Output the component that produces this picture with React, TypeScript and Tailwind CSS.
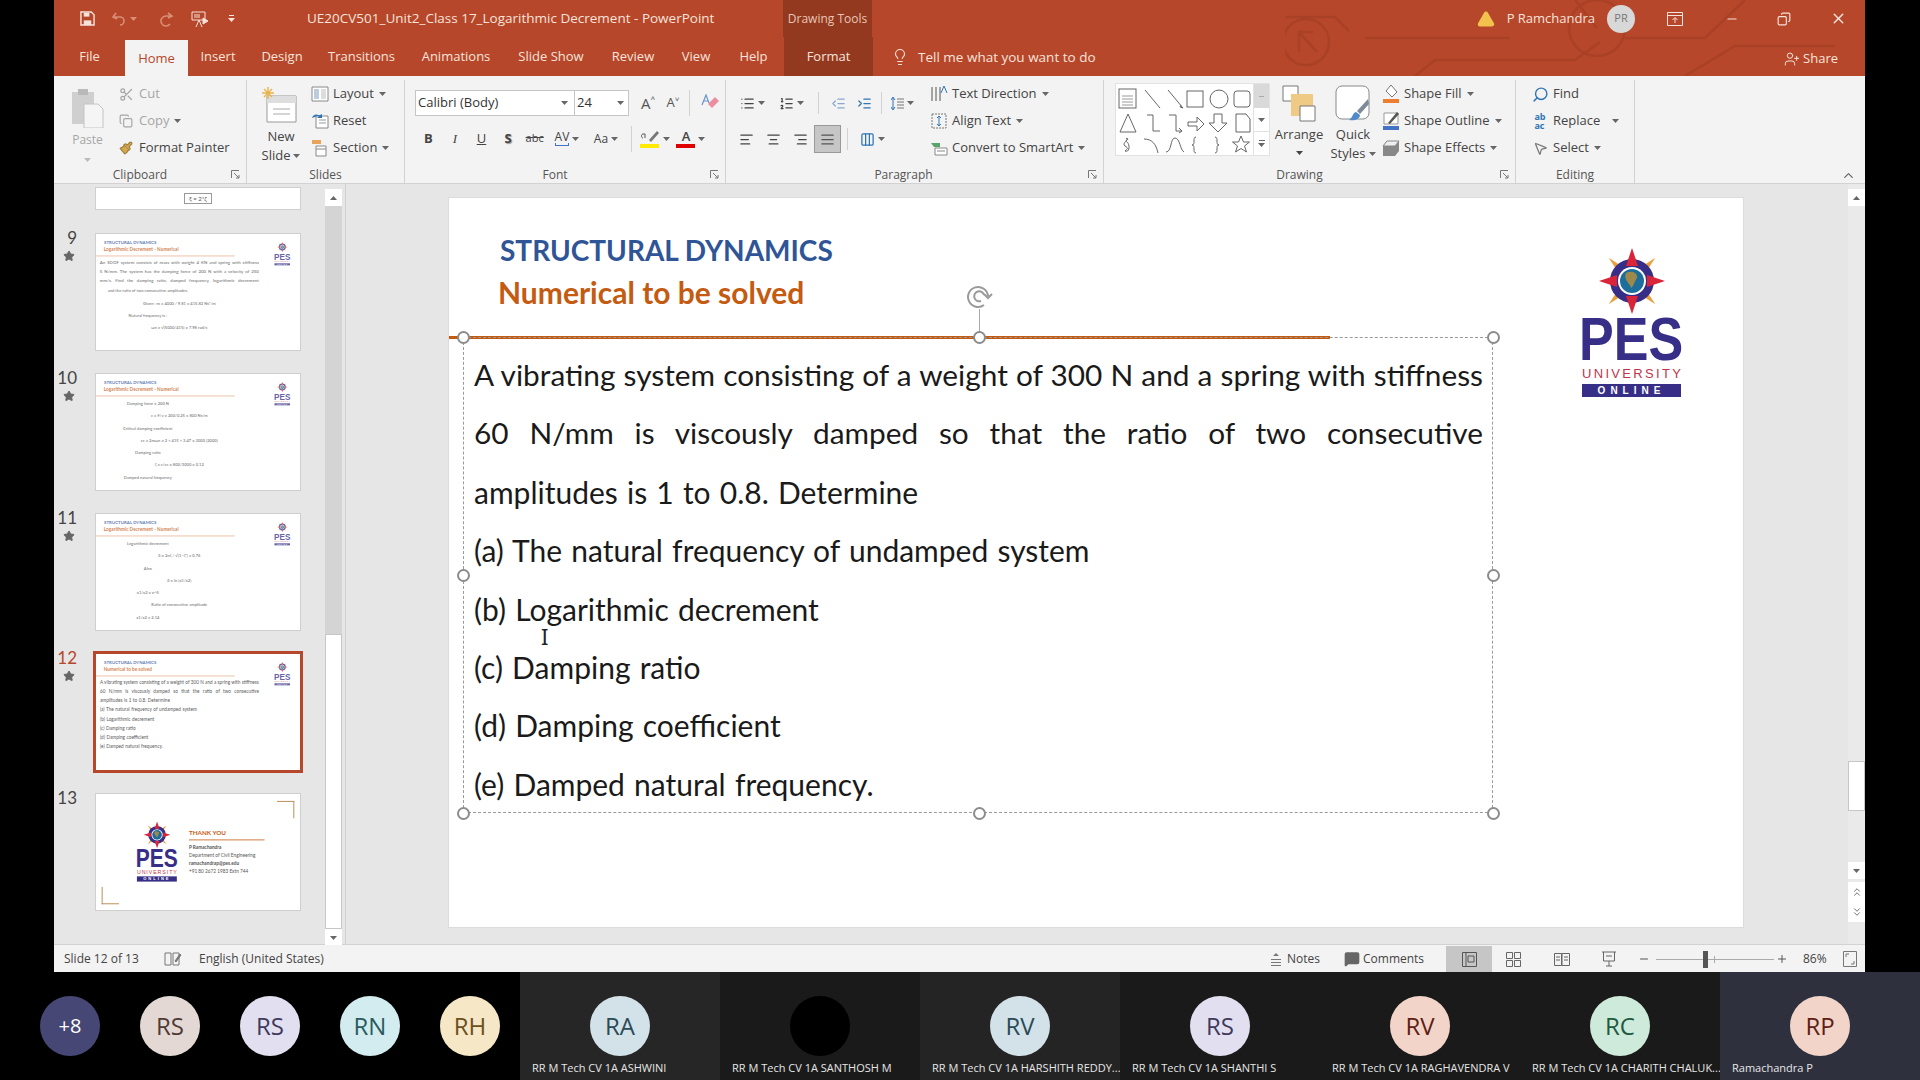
import {
  AlignCenter,
  AlignJustify,
  AlignLeft,
  AlignRight,
  ChevronDown,
  ChevronUp,
  Columns3,
  Copy,
  IndentDecrease,
  IndentIncrease,
  Lightbulb,
  List,
  ListOrdered,
  MessageSquare,
  Minus,
  MousePointer2,
  Paintbrush,
  Plus,
  Scissors,
  Search,
  Star,
  TriangleAlert,
  UserPlus,
  X,
} from "lucide-react";
import type { ReactNode } from "react";

const ui = "font-['Open_Sans','Liberation_Sans',sans-serif]";
const slideFont = "font-['Lato','Liberation_Sans',sans-serif]";

function Caret({ className = "text-[#666]" }: { className?: string }) {
  return (
    <svg width="7" height="4" viewBox="0 0 7 4" className={`shrink-0 ${className}`}>
      <path d="M0 0h7L3.5 4z" fill="currentColor" />
    </svg>
  );
}

function Tab({ label, w, active, ctx }: { label: string; w: string; active?: boolean; ctx?: boolean }) {
  return (
    <div
      className={`flex ${w} items-center justify-center pt-[1px] text-[13px] ${
        active ? "mt-[3px] bg-[#f3f3f3] text-[#b7472a]" : ctx ? "bg-[#93391f] text-[#f6e3dc]" : "text-[#f6e3dc]"
      }`}
    >
      {label}
    </div>
  );
}

function SmallBtn({ icon, label, caret, muted, gap = "gap-[3px]" }: { icon: ReactNode; label: string; caret?: boolean; muted?: boolean; gap?: string }) {
  return (
    <div className={`flex h-[27px] items-center ${gap} whitespace-nowrap pt-[1px] text-[13px] ${muted ? "text-[#a6a6a6]" : "text-[#444]"}`}>
      <span className="flex w-[20px] shrink-0 items-center justify-center">{icon}</span>
      <span>{label}</span>
      {caret && <Caret className="ml-[2px] text-[#666]" />}
    </div>
  );
}

function Launcher() {
  return (
    <svg width="9" height="9" viewBox="0 0 9 9" className="absolute bottom-[4px] right-[6px] text-[#777]">
      <path d="M.5 8V.5H8M3 3l5 5M8 5v3H5" fill="none" stroke="currentColor" />
    </svg>
  );
}

function Group({ w, label, launcher, pad = "", children }: { w: string; label: string; launcher?: boolean; pad?: string; children: ReactNode }) {
  return (
    <div className={`relative mt-[4px] flex ${w} shrink-0 flex-col border-r border-[#d2d2d2]`}>
      <div className="flex min-h-0 flex-1">{children}</div>
      <div className={`pb-[1px] text-center text-[12px] leading-[15px] text-[#555] ${pad}`}>{label}</div>
      {launcher && <Launcher />}
    </div>
  );
}

function FontCell({ w, children }: { w: string; children: ReactNode }) {
  return <div className={`flex ${w} shrink-0 items-center justify-center gap-[3px] text-[#444]`}>{children}</div>;
}

function ShapeGallery() {
  return (
    <div className="flex h-[73px] w-[155px] border border-[#e2e2e2] bg-white">
      <svg width="137" height="71" viewBox="0 0 137 71" fill="none" stroke="#666" strokeWidth="1" className="shrink-0">
        <rect x="3" y="5" width="17" height="19" />
        <path d="M6 12h11M6 15h11M6 18h11M6 21h11" stroke="#999" />
        <path d="M29 6l15 18M52 6l15 18M67 24l-3-1 1-2" />
        <rect x="71" y="7" width="16" height="16" />
        <circle cx="103" cy="15" r="9" />
        <rect x="118" y="7" width="16" height="16" rx="3" />
        <path d="M12 30l-8 18h16zM31 31h6v16h7M53 31h7v16h6M63 44l3 3-3 2" />
        <path d="M72 38h9v-5l7 7-7 7v-5h-9zM98 30h8v9h5l-9 9-9-9h5zM120 30h10l4 5v13h-14z" />
        <path d="M10 54c4 2-5 5-1 8s3 2 0 5c5 2 5-7 2-9s3-2 0-4M28 55c8 0 12 5 14 14M50 68c6 0 4-14 9-14s5 12 9 14" />
        <path d="M80 53c-4 0 0 8-4 8 4 0 0 8 4 8M99 53c4 0 0 8 4 8-4 0 0 8-4 8" />
        <path d="M125 52l2.5 6h6l-5 4 2 6-5.500-3.500-5.500 3.500 2-6-5-4h6z" />
      </svg>
      <div className="flex w-[17px] flex-col border-l border-[#e2e2e2]">
        <div className="flex h-[24px] items-center justify-center bg-[#d9d9d9]"><div className="h-px w-[5px] bg-[#aaa]" /></div>
        <div className="flex h-[23px] items-center justify-center"><Caret /></div>
        <div className="flex flex-1 flex-col items-center justify-center gap-[2px] border-t border-[#e2e2e2]"><div className="h-px w-[6px] bg-[#666]" /><Caret /></div>
      </div>
    </div>
  );
}

function Ribbon() {
  return (
    <div className={`flex h-[107px] shrink-0 bg-[#f3f3f3] ${ui}`}>
      <Group w="w-[193px]" label="Clipboard" launcher pad="pr-[20px]">
        <div className="flex w-[60px] flex-col items-center pl-[7px] pt-[8px] text-[12px] text-[#a6a6a6]">
          <svg width="34" height="40" viewBox="0 0 34 40">
            <path d="M1 4h22v32H1z" fill="#cfcfcf" />
            <path d="M7 1h10v6H7z" fill="#b9b9b9" />
            <path d="M13 16h14l5 5v19H13z" fill="#f5f5f5" stroke="#c4c4c4" />
          </svg>
          <span className="mt-[3px]">Paste</span>
          <Caret className="mt-[9px] text-[#bbb]" />
        </div>
        <div className="flex flex-col pl-[2px]">
          <SmallBtn muted label="Cut" icon={<Scissors size={15} className="text-[#a6a6a6]" />} />
          <SmallBtn muted label="Copy" icon={<Copy size={14} className="text-[#a6a6a6]" />} caret />
          <SmallBtn label="Format Painter" icon={<Paintbrush size={14} className="fill-[#d4a84f] text-[#a0803f]" />} />
        </div>
      </Group>

      <Group w="w-[158px]" label="Slides">
        <div className="flex w-[62px] flex-col items-center pl-[6px] pt-[7px] text-[13px] leading-[19px] text-[#444]">
          <svg width="38" height="39" viewBox="0 0 38 39">
            <path d="M5 9h29v26H5z" fill="#fff" stroke="#999" />
            <path d="M5 9h29v7H5z" fill="#dedede" />
            <path d="M11 22h17M11 27h17" stroke="#aaa" />
            <path d="M6 0v12M0 6h12M2 2l8 8M10 2l-8 8" stroke="#e8b54d" strokeWidth="1.400" />
          </svg>
          <span className="mt-[1px]">New</span>
          <span className="flex items-center gap-[3px]">Slide <Caret /></span>
        </div>
        <div className="flex flex-col pl-[1px]">
          <SmallBtn label="Layout" caret icon={<svg width="18" height="16" viewBox="0 0 18 16"><path d="M1 1h16v14H1z" fill="#fff" stroke="#888" /><path d="M3 3h5v10H3z" fill="#bcd" /><path d="M10 3h5v10h-5z" fill="#ddd" /></svg>} />
          <SmallBtn label="Reset" icon={<svg width="18" height="16" viewBox="0 0 18 16"><path d="M5 3h12v12H5z" fill="#fff" stroke="#888" /><path d="M8 7h7M8 10h7" stroke="#999" /><path d="M1 5a4 4 0 0 1 7-2L6 5h5V1L9 2" fill="#2f75b5" /></svg>} />
          <SmallBtn label="Section" caret icon={<svg width="18" height="18" viewBox="0 0 18 18"><path d="M1 1h9v4H1z" fill="#e9a35a" /><path d="M5 7h10v10H5z" fill="#fff" stroke="#888" /><path d="M5 10h10" stroke="#888" /></svg>} />
        </div>
      </Group>

      <Group w="w-[321px]" label="Font" launcher pad="pr-[20px]">
        <div className="flex flex-col pl-[10px] pt-[10px]">
          <div className="flex h-[26px] items-center">
            <div className="flex h-[26px] w-[160px] items-center justify-between border border-[#c6c6c6] bg-white pl-[2px] pr-[6px] text-[13px] text-[#333]">
              Calibri (Body) <Caret />
            </div>
            <div className="flex h-[26px] w-[54px] items-center justify-between border border-l-0 border-[#c6c6c6] bg-white pl-[2px] pr-[4px] text-[13px] text-[#333]">
              24 <Caret />
            </div>
            <div className="ml-[6px] flex w-[26px] justify-center text-[15px] text-[#555]">A<span className="text-[8px]">˄</span></div>
            <div className="flex w-[24px] justify-center text-[13px] text-[#555]">A<span className="text-[8px]">˅</span></div>
            <div className="mx-[4px] h-[26px] w-px bg-[#d2d2d2]" />
            <div className="ml-[4px] flex w-[24px] items-center justify-center">
              <svg width="19" height="19" viewBox="0 0 19 19"><path d="M7 10l7-7 4 4-7 7z" fill="#eb8f9e" /><path d="M1 11L5 1l3 8M2.500 7h4" fill="none" stroke="#6b93c9" strokeWidth="1.200" /></svg>
            </div>
          </div>
          <div className="mt-[9px] flex h-[27px] items-center text-[13px]">
            <FontCell w="w-[26.600px]"><b>B</b></FontCell>
            <FontCell w="w-[26.600px]"><i className="font-['Liberation_Serif',serif]">I</i></FontCell>
            <FontCell w="w-[26.600px]"><span className="underline">U</span></FontCell>
            <FontCell w="w-[26.600px]"><b className="[text-shadow:1px_1px_1px_#999]">S</b></FontCell>
            <FontCell w="w-[26.600px]"><span className="text-[11px] line-through">abc</span></FontCell>
            <FontCell w="w-[38px]"><span className="text-[12px] leading-[12px]">AV<span className="block h-[3px] border-b border-x border-[#4472c4]" /></span><Caret /></FontCell>
            <FontCell w="w-[40px]"><span className="text-[12px]">Aa</span><Caret /></FontCell>
            <div className="mx-[5px] h-[26px] w-px bg-[#d2d2d2]" />
            <FontCell w="w-[36px]">
              <span className="flex flex-col items-center"><svg width="20" height="15" viewBox="0 0 20 15"><path d="M9 11l8-9 2 2-8 9z" fill="#777" /><path d="M3 9c-2 0-2-4 0-4h2v4" fill="none" stroke="#555" /></svg><span className="h-[4px] w-[19px] bg-[#ffea00]" /></span>
              <Caret />
            </FontCell>
            <FontCell w="w-[36px]">
              <span className="flex flex-col items-center leading-[15px]"><span className="font-semibold">A</span><span className="h-[4px] w-[19px] bg-[#e00000]" /></span>
              <Caret />
            </FontCell>
          </div>
        </div>
      </Group>

      <Group w="w-[378px]" label="Paragraph" launcher pad="pr-[22px]">
        <div className="flex w-[199px] flex-col pt-[10px] text-[#777]">
          <div className="flex h-[26px] items-center pl-[7px]">
            <FontCell w="w-[38px]"><List size={15} /><Caret /></FontCell>
            <FontCell w="w-[40px]"><ListOrdered size={15} /><Caret /></FontCell>
            <div className="ml-[7px] mr-[6px] h-[22px] w-px bg-[#d2d2d2]" />
            <FontCell w="w-[26px]"><IndentDecrease size={15} className="text-[#8aa9cf]" /></FontCell>
            <FontCell w="w-[26px]"><IndentIncrease size={15} className="text-[#2f75b5]" /></FontCell>
            <div className="mx-[4px] h-[22px] w-px bg-[#d2d2d2]" />
            <FontCell w="w-[32px]"><svg width="13" height="15" viewBox="0 0 13 15" fill="none"><path d="M2 2v11" stroke="#2f75b5" /><path d="M0 4l2-3 2 3M0 11l2 3 2-3" stroke="#2f75b5" /><path d="M6 3h7M6 6h7M6 9h7M6 12h7" stroke="#777" /></svg><Caret /></FontCell>
          </div>
          <div className="mt-[9px] flex h-[28px] items-center pl-[7px]">
            <FontCell w="w-[27px]"><AlignLeft size={15} /></FontCell>
            <FontCell w="w-[27px]"><AlignCenter size={15} /></FontCell>
            <FontCell w="w-[27px]"><AlignRight size={15} /></FontCell>
            <div className="flex h-[28px] w-[27px] items-center justify-center border border-[#999] bg-[#c6c6c6] text-[#555]"><AlignJustify size={15} /></div>
            <div className="ml-[6px] mr-[7px] h-[22px] w-px bg-[#d2d2d2]" />
            <FontCell w="w-[34px]"><Columns3 size={15} className="text-[#2f75b5]" /><Caret /></FontCell>
          </div>
        </div>
        <div className="ml-[4px] flex flex-col">
          <SmallBtn label="Text Direction" caret icon={<svg width="18" height="18" viewBox="0 0 18 18" fill="none" stroke="#555"><path d="M2 2v14M6 2v14M10 2v14" /><path d="M11 8l3-7 3 7" stroke="#2f75b5" /></svg>} />
          <SmallBtn label="Align Text" caret icon={<svg width="18" height="18" viewBox="0 0 18 18" fill="none" stroke="#777"><path d="M2 2h14v14H2z" strokeDasharray="2 1" /><path d="M9 4v10M7 6l2-2 2 2M7 12l2 2 2-2" stroke="#2f75b5" /></svg>} />
          <SmallBtn label="Convert to SmartArt" caret icon={<svg width="18" height="16" viewBox="0 0 18 16"><path d="M1 3h9v4H4z" fill="#5aa469" /><path d="M5 8h12v7H5z" fill="#fff" stroke="#888" /><path d="M7 11h8" stroke="#888" /></svg>} />
        </div>
      </Group>

      <Group w="w-[412px]" label="Drawing" launcher pad="pr-[20px]">
        <div className="ml-[11px] mt-[3px]"><ShapeGallery /></div>
        <div className="flex w-[58px] flex-col items-center pt-[5px] text-[13px] leading-[19px] text-[#444]">
          <svg width="34" height="38" viewBox="0 0 34 38">
            <path d="M1 1h15v15H1z" fill="#fff" stroke="#777" />
            <path d="M9 9h22v22H9z" fill="#eeca84" />
            <path d="M18 21h15v15H18z" fill="#fff" stroke="#777" />
          </svg>
          <span className="mt-[2px]">Arrange</span>
          <Caret className="mt-[7px]" />
        </div>
        <div className="flex w-[50px] flex-col items-center pt-[5px] text-[13px] leading-[19px] text-[#444]">
          <svg width="38" height="38" viewBox="0 0 38 38">
            <rect x="2" y="1" width="33" height="33" rx="6" fill="#fff" stroke="#888" />
            <path d="M34 14L23 26l3 3 9-10z" fill="#7f8a99" />
            <path d="M22 27c-4 1-3 6-7 8 6 1 11-1 11-5z" fill="#4f8bc9" />
          </svg>
          <span className="mt-[2px]">Quick</span>
          <span className="flex items-center gap-[3px]">Styles <Caret /></span>
        </div>
        <div className="ml-[3px] flex flex-col">
          <SmallBtn label="Shape Fill" caret icon={<svg width="18" height="20" viewBox="0 0 18 20"><path d="M9 1l6 7-5 5-6-6z" fill="#fff" stroke="#777" /><path d="M1 15h16v4H1z" fill="#ed7d31" /></svg>} />
          <SmallBtn label="Shape Outline" caret icon={<svg width="18" height="20" viewBox="0 0 18 20"><path d="M2 2h14v11H2z" fill="#fff" stroke="#999" /><path d="M6 12l9-11 2 2-9 10z" fill="#555" /><path d="M1 15h16v4H1z" fill="#4472c4" /></svg>} />
          <SmallBtn label="Shape Effects" caret icon={<svg width="18" height="18" viewBox="0 0 18 18"><path d="M5 2h12v10l-4 5H1V7z" fill="#888" /><path d="M5 2h12L13 7H1z" fill="#eee" stroke="#888" /></svg>} />
        </div>
      </Group>

      <Group w="w-[119px]" label="Editing">
        <div className="flex flex-col pl-[14px]">
          <SmallBtn label="Find" icon={<Search size={17} className="-scale-x-100 text-[#2f75b5]" />} />
          <div className="flex items-center gap-[12px]">
            <SmallBtn label="Replace" icon={<span className="text-[9px] font-bold leading-[9px] text-[#2f75b5]">ab<br />ac</span>} />
            <Caret />
          </div>
          <SmallBtn label="Select" caret icon={<MousePointer2 size={15} className="text-[#777]" />} />
        </div>
      </Group>

      <div className="flex flex-1 items-end justify-end pb-[0px] pr-[9px]"><ChevronUp size={15} className="text-[#666]" /></div>
    </div>
  );
}

function Compass() {
  return (
    <svg width="66" height="66" viewBox="-33 -33 66 66">
      <g fill="#e8a13c">
        {[45, 135, 225, 315].map((a) => (
          <path key={a} d="M-4 -14L0 -33L4 -14z" transform={`rotate(${a})`} />
        ))}
      </g>
      <circle r="22" fill="#372f87" />
      <g fill="#d9243a">
        {[0, 90, 180, 270].map((a) => (
          <path key={a} d="M-6 -15L0 -33L6 -15z" transform={`rotate(${a})`} />
        ))}
      </g>
      <circle r="14" fill="#fff" />
      <circle r="12" fill="#1c6e9c" />
      <path d="M-6 -8c6-3 12 0 11 5-2 2-3 8-6 10-1-5-8-8-5-15z" fill="#9d8a4a" />
    </svg>
  );
}

function Logo() {
  return (
    <div className="flex w-[99px] flex-col items-center">
      <Compass />
      <div className="h-[50px] origin-top scale-x-[0.84] whitespace-nowrap font-['Liberation_Sans',sans-serif] text-[62px] font-bold leading-[50px] text-[#372f87]">PES</div>
      <div className="mt-[3px] flex w-[99px] justify-between font-['Liberation_Sans',sans-serif] text-[13px] leading-[14px] text-[#c0354a]">
        {"UNIVERSITY".split("").map((c, i) => <span key={i}>{c}</span>)}
      </div>
      <div className="mt-[3px] flex h-[13px] w-[99px] items-center justify-center bg-[#372f87] font-['Liberation_Sans',sans-serif] text-[10px] font-bold tracking-[5px] text-white">ONLINE</div>
    </div>
  );
}

function SlideHead({ sub }: { sub: string }) {
  return (
    <>
      <div className={`pl-[51px] pt-[34px] text-[28px] font-bold leading-[36px] text-[#2f5597] ${slideFont}`}>STRUCTURAL DYNAMICS</div>
      <div className={`mt-[6px] pl-[49px] text-[30px] font-bold leading-[36px] text-[#c55a11] ${slideFont}`}>{sub}</div>
      <div className="mt-[26px] h-[3px] w-[881px] bg-[#c55a11]" />
    </>
  );
}

const problem = [
  "(a) The natural frequency of undamped system",
  "(b) Logarithmic decrement",
  "(c) Damping ratio",
  "(d) Damping coefficient",
  "(e) Damped natural frequency.",
];

function ProblemBody() {
  const justified = "h-[58.400px] text-[29.800px] [word-spacing:0] [text-align-last:justify]";
  return (
    <div className={`ml-[25px] mt-[7px] w-[1009px] text-[30px] leading-[58.400px] text-[#1a1a1a] [word-spacing:1.500px] ${slideFont}`}>
      <div className={justified}>A vibrating system consisting of a weight of 300 N and a spring with stiffness</div>
      <div className={justified}>60 N/mm is viscously damped so that the ratio of two consecutive</div>
      <div className="h-[58.400px]">amplitudes is 1 to 0.8. Determine</div>
      {problem.map((p) => <div key={p} className="h-[58.400px]">{p}</div>)}
    </div>
  );
}

function Handle({ className }: { className: string }) {
  return <div className={`absolute h-[13px] w-[13px] rounded-full border-2 border-[#8c8c8c] bg-white ${className}`} />;
}

function MainSlide() {
  return (
    <div className="relative h-[731px] w-[1296px] shrink-0 border border-[#dcdcdc] bg-white">
      <SlideHead sub="Numerical to be solved" />
      <ProblemBody />
      <div className="absolute left-[1133px] top-[50px]"><Logo /></div>
      <div className="absolute left-[14px] top-[139px] h-[476px] w-[1030px] border border-dashed border-[#9a9a9a]" />
      <div className="absolute left-[530px] top-[111px] h-[28px] w-px bg-[#aaa]" />
      <svg width="30" height="26" viewBox="0 0 30 26" fill="none" stroke="#9a9a9a" strokeWidth="2" className="absolute left-[515px] top-[87px]">
        <path d="M20 20a10 10 0 1 1 4-9" />
        <path d="M17 16a5 5 0 1 1 3-6" />
        <path d="M20 9l4 4 4-4" />
      </svg>
      <Handle className="left-[8px] top-[133px]" />
      <Handle className="left-[524px] top-[133px]" />
      <Handle className="left-[1038px] top-[133px]" />
      <Handle className="left-[8px] top-[371px]" />
      <Handle className="left-[1038px] top-[371px]" />
      <Handle className="left-[8px] top-[609px]" />
      <Handle className="left-[524px] top-[609px]" />
      <Handle className="left-[1038px] top-[609px]" />
      <div className="absolute left-[92px] top-[426px] text-[22px] leading-[24px] text-[#222]">I</div>
    </div>
  );
}

function MiniBody({ lines, formulas }: { lines: string[]; formulas: string[] }) {
  return (
    <div className={`ml-[24px] mt-[7px] w-[1010px] text-[28px] font-semibold leading-[58px] text-[#555] ${slideFont}`}>
      {lines.map((l) => <div key={l} className="[text-align-last:justify]">{l}</div>)}
      {formulas.map((f, i) => (
        <div key={f} className={`text-center text-[26px] leading-[78px] ${i % 2 ? "" : "pr-[400px]"}`}>{f}</div>
      ))}
    </div>
  );
}

function Mini({ sub, lines = [], formulas = [], problemSlide }: { sub: string; lines?: string[]; formulas?: string[]; problemSlide?: boolean }) {
  return (
    <div className="relative h-[730px] w-[1295px] origin-top-left scale-[0.1575] bg-white opacity-75">
      <SlideHead sub={sub} />
      {problemSlide ? <ProblemBody /> : <MiniBody lines={lines} formulas={formulas} />}
      <div className="absolute left-[1133px] top-[50px]"><Logo /></div>
    </div>
  );
}

function ThankYou() {
  return (
    <div className="relative flex h-[730px] w-[1295px] origin-top-left scale-[0.1575] items-center bg-white pl-[337px]">
      <div className="origin-center scale-[2.560]"><Logo /></div>
      <div className={`ml-[154px] text-[30px] leading-[50px] text-[#555] ${slideFont}`}>
        <div className="text-[40px] font-bold leading-[56px] text-[#c55a11]">THANK YOU</div>
        <div className="mb-[18px] mt-[14px] h-[5px] w-[480px] bg-[#c55a11]" />
        <div className="font-bold">P Ramachandra</div>
        <div>Department of Civil Engineering</div>
        <div className="font-bold">ramachandrap@pes.edu</div>
        <div>+91 80 2672 1983 Extn 744</div>
      </div>
      <div className="absolute right-[36px] top-[44px] h-[110px] w-[110px] border-r-[6px] border-t-[6px] border-[#b98a55]" />
      <div className="absolute bottom-[30px] left-[36px] h-[110px] w-[110px] border-b-[6px] border-l-[6px] border-[#b98a55]" />
    </div>
  );
}

function ThumbRow({ n, star = true, active, children }: { n: number; star?: boolean; active?: boolean; children: ReactNode }) {
  return (
    <div className="flex h-[140px] shrink-0">
      <div className={`-mt-[6px] flex w-[42px] flex-col items-end pr-[19px] text-[17px] leading-[20px] ${active ? "text-[#b7472a]" : "text-[#444]"}`}>
        <span>{n}</span>
        {star && <Star size={12} className="mt-[2px] mr-[2px] fill-[#666] text-[#666]" />}
      </div>
      <div className={`h-[116px] w-[204px] overflow-hidden bg-white ${active ? "outline-[3px] outline-[#b7472a]" : "outline-1 outline-[#cfcfcf]"}`}>
        {children}
      </div>
    </div>
  );
}

function SlidePanel() {
  return (
    <div className={`flex w-[291px] shrink-0 ${slideFont}`}>
      <div className="flex w-[271px] flex-col overflow-hidden">
        <div className="ml-[42px] mt-[4px] flex h-[21px] w-[204px] items-center justify-center bg-white outline-1 outline-[#cfcfcf]">
          <div className="border border-[#999] px-[4px] text-[6px] leading-[9px] text-[#555]">ξ = 2*ζ</div>
        </div>
        <div className="mt-[25px] flex flex-col">
          <ThumbRow n={9}>
            <Mini
              sub="Logarithmic Decrement - Numerical"
              lines={[
                "An SDOF system consists of mass with weight 4 KN and spring with stiffness",
                "5 N/mm. The system has the damping force of 200 N with a velocity of 250",
                "mm/s. Find the damping ratio, damped frequency, logarithmic decrement",
              ]}
              formulas={["and the ratio of two consecutive amplitudes.", "Given : m = 4000 / 9.81 = 415.82 Ns²/m", "Natural frequency is :", "ωn = √(5000/415) = 7.98 rad/s"]}
            />
          </ThumbRow>
          <ThumbRow n={10}>
            <Mini
              sub="Logarithmic Decrement - Numerical"
              formulas={["Damping force = 200 N", "c = F/v = 200/0.25 = 800 Ns/m", "Critical damping coefficient", "cc = 2mωn = 2 × 415 × 3.47 = 3000 (2000)", "Damping ratio", "ζ = c/cc = 800/3000 = 0.12", "Damped natural frequency"]}
            />
          </ThumbRow>
          <ThumbRow n={11}>
            <Mini
              sub="Logarithmic Decrement - Numerical"
              formulas={["Logarithmic decrement", "δ = 2πζ / √(1−ζ²) = 0.76", "Also", "δ = ln (x1/x2)", "x1/x2 = e^δ", "Ratio of consecutive amplitude", "x1/x2 = 2.14"]}
            />
          </ThumbRow>
          <ThumbRow n={12} active>
            <Mini sub="Numerical to be solved" problemSlide />
          </ThumbRow>
          <ThumbRow n={13} star={false}>
            <ThankYou />
          </ThumbRow>
        </div>
      </div>
      <div className="mt-[5px] flex h-[757px] w-[17px] flex-col bg-[#d4d4d4]">
        <div className="flex h-[17px] items-center justify-center bg-white"><Caret className="rotate-180 text-[#666]" /></div>
        <div className="h-[428px]" />
        <div className="flex-1 border border-[#c6c6c6] bg-white" />
        <div className="flex h-[17px] items-center justify-center bg-white"><Caret className="text-[#666]" /></div>
      </div>
    </div>
  );
}

function EditScrollbar() {
  return (
    <div className="flex w-[17px] shrink-0 flex-col bg-[#eaeaea]">
      <div className="mt-[5px] flex h-[17px] items-center justify-center bg-white"><Caret className="rotate-180 text-[#666]" /></div>
      <div className="h-[555px]" />
      <div className="h-[50px] border border-[#c6c6c6] bg-white" />
      <div className="h-[51px]" />
      <div className="flex h-[17px] items-center justify-center bg-white"><Caret className="text-[#666]" /></div>
      <div className="mt-[3px] flex h-[20px] flex-col items-center justify-center bg-white"><ChevronUp size={10} className="text-[#555]" /><ChevronUp size={10} className="-mt-[6px] text-[#555]" /></div>
      <div className="flex h-[20px] flex-col items-center justify-center bg-white"><ChevronDown size={10} className="text-[#555]" /><ChevronDown size={10} className="-mt-[6px] text-[#555]" /></div>
    </div>
  );
}

function StatusBar() {
  return (
    <div className={`flex h-[27px] shrink-0 items-center bg-[#f3f3f3] pt-[1px] text-[12px] text-[#444] ${ui}`}>
      <span className="ml-[10px] w-[100px]">Slide 12 of 13</span>
      <svg width="18" height="16" viewBox="0 0 18 16" fill="none" stroke="#777"><path d="M1 2h6v12H1zM9 2h6v12H9z" /><path d="M11 10l5-7 1 1-5 7z" fill="#777" /></svg>
      <span className="ml-[17px]">English (United States)</span>
      <div className="ml-auto flex h-full items-center">
        <svg width="12" height="14" viewBox="0 0 12 14" fill="#777"><path d="M3 4l3-3 3 3zM1 7h10v1H1zM1 10h10v1H1zM1 13h10v1H1z" /></svg>
        <span className="ml-[5px] w-[57px]">Notes</span>
        <MessageSquare size={16} className="fill-[#666] text-[#666]" />
        <span className="ml-[3px] w-[83px]">Comments</span>
        <div className="flex h-full w-[46px] items-center justify-center bg-[#c6c6c6]">
          <svg width="15" height="15" viewBox="0 0 15 15" fill="none" stroke="#555"><path d="M.5.5h14v14H.5zM4 .5v14M6 4h6v6H6z" /></svg>
        </div>
        <svg width="15" height="15" viewBox="0 0 15 15" fill="none" stroke="#666" className="ml-[14px]"><path d="M.5.5h6v6h-6zM8.500.5h6v6h-6zM.5 8.500h6v6h-6zM8.500 8.500h6v6h-6z" /></svg>
        <svg width="16" height="15" viewBox="0 0 16 15" fill="none" stroke="#666" className="ml-[33px]"><path d="M.5 1.500h7v12h-7zM8 1.500h7.500v12H8zM2 5h4M2 8h4M10 5h4M10 8h4" /></svg>
        <svg width="16" height="16" viewBox="0 0 16 16" fill="none" stroke="#666" className="ml-[31px]"><path d="M1 1h14M2.500 1v9h11V1M8 10v5M5 15h6M5 5h6" /></svg>
        <Minus size={12} className="ml-[21px] text-[#555]" />
        <div className="relative ml-[6px] h-px w-[118px] bg-[#aaa]">
          <div className="absolute left-[47px] top-[-8px] h-[17px] w-[5px] bg-[#555]" />
          <div className="absolute left-[58px] top-[-3px] h-[7px] w-px bg-[#aaa]" />
        </div>
        <Plus size={12} className="ml-[2px] text-[#555]" />
        <span className="ml-[15px] w-[24px]">86%</span>
        <svg width="14" height="16" viewBox="0 0 14 16" fill="none" stroke="#777" className="ml-[16px] mr-[8px]"><path d="M.5.5h13v15H.5zM3 3h3M3 3v3M11 13H8M11 13v-3" /></svg>
      </div>
    </div>
  );
}

function TitleBar() {
  return (
    <div className={`flex h-[37px] shrink-0 items-center text-[#f6e3dc] ${ui}`}>
      <svg width="15" height="15" viewBox="0 0 16 16" className="ml-[26px]"><path d="M1 1h11l3 3v11H1z" fill="none" stroke="#f6e3dc" strokeWidth="1.500" /><path d="M4 2h6v4H4z" fill="#f6e3dc" /><path d="M4 10h8v5H4z" fill="#f6e3dc" /></svg>
      <svg width="16" height="16" viewBox="0 0 16 16" fill="none" stroke="#d98f77" strokeWidth="1.600" className="ml-[16px]"><path d="M5 2L2 6l4 2M2 6h7a4 4 0 0 1 0 8" /></svg>
      <Caret className="ml-[3px] text-[#d98f77]" />
      <svg width="16" height="16" viewBox="0 0 16 16" fill="none" stroke="#d98f77" strokeWidth="1.600" className="ml-[21px]"><path d="M10 2l4 3-4 2M13 5H8a5 5 0 1 0 4 8" /></svg>
      <svg width="18" height="18" viewBox="0 0 18 18" fill="none" stroke="#f6e3dc" className="ml-[17px]"><path d="M1 2h13v8H1zM3 5h6M3 7h6M8 10l-3 7M8 10l3 7" /><path d="M12 8l5 3-5 3z" fill="#f6e3dc" /></svg>
      <div className="ml-[19px] flex flex-col items-center gap-[2px]"><div className="h-px w-[5px] bg-[#f6e3dc]" /><Caret className="text-[#f6e3dc]" /></div>
      <span className="ml-[72px] w-[467px] whitespace-nowrap text-[13.500px]">UE20CV501_Unit2_Class 17_Logarithmic Decrement  -  PowerPoint</span>
      <div className="ml-[9px] flex h-full w-[89px] items-center justify-center bg-[#93391f] text-[12px] text-[#e9c5b8]">Drawing Tools</div>
      <div className="relative z-10 ml-auto flex h-full items-center">
        <TriangleAlert size={18} className="fill-[#f2c14e] text-[#f2c14e]" />
        <span className="ml-[12px] text-[13px]">P Ramchandra</span>
        <div className="ml-[12px] flex h-[28px] w-[28px] items-center justify-center rounded-full bg-[#d8d8d8] text-[11px] text-[#777]">PR</div>
        <svg width="16" height="14" viewBox="0 0 16 14" fill="none" stroke="#f6e3dc" className="ml-[32px]"><path d="M.5.5h15v13H.5zM.5 3.500h15" /><path d="M8 11V6M5.500 8L8 5.500 10.500 8" /></svg>
        <Minus size={14} className="ml-[42px]" />
        <Copy size={14} className="ml-[38px] scale-x-[-1]" />
        <X size={17} className="ml-[39px] mr-[18px]" />
      </div>
    </div>
  );
}

function TabRow() {
  return (
    <div className={`relative z-10 flex h-[39px] shrink-0 text-[#f6e3dc] ${ui}`}>
      <Tab label="File" w="w-[71px]" />
      <Tab label="Home" w="w-[63px]" active />
      <Tab label="Insert" w="w-[60px]" />
      <Tab label="Design" w="w-[68px]" />
      <Tab label="Transitions" w="w-[91px]" />
      <Tab label="Animations" w="w-[98px]" />
      <Tab label="Slide Show" w="w-[92px]" />
      <Tab label="Review" w="w-[72px]" />
      <Tab label="View" w="w-[54px]" />
      <Tab label="Help" w="w-[61px]" />
      <Tab label="Format" w="w-[89px]" ctx />
      <div className="ml-[18px] flex items-center gap-[9px] pt-[1px] text-[13.500px]">
        <Lightbulb size={18} strokeWidth={1.500} />
        Tell me what you want to do
      </div>
      <div className="ml-auto flex items-center gap-[3px] pr-[27px] pt-[5px] text-[13px]">
        <UserPlus size={16} strokeWidth={1.500} />
        Share
      </div>
    </div>
  );
}

function Circuit() {
  return (
    <svg width="560" height="76" viewBox="0 0 560 76" fill="none" stroke="#a84126" strokeWidth="2.500" className="absolute right-[20px] top-0">
      <circle cx="21" cy="42" r="23" />
      <path d="M-4 17H50l14 14M14 52V32h14M14 32l18 20" />
      <path d="M80 38H225M130 76l20-16H290l25-18" />
      <circle cx="312" cy="28" r="28" />
      <path d="M340 38h80l40-38M400 76l50-30h100M290 0l22 28" />
    </svg>
  );
}

function Avatar({ text, bg, fg }: { text: string; bg: string; fg: string }) {
  return <div className={`flex h-[60px] w-[60px] items-center justify-center rounded-full text-[24px] ${bg} ${fg}`}>{text}</div>;
}

function Tile({ name, text, bg, avatar, fg }: { name: string; text: string; bg: string; avatar: string; fg: string }) {
  return (
    <div className={`flex w-[200px] flex-col ${bg}`}>
      <div className="mt-[24px] flex justify-center"><Avatar text={text} bg={avatar} fg={fg} /></div>
      <div className="mt-[3px] overflow-hidden whitespace-nowrap pl-[12px] text-[11px] leading-[17px] text-[#e6e6e6]">{name}</div>
    </div>
  );
}

function MeetingBar() {
  return (
    <div className={`flex h-[108px] shrink-0 bg-black ${ui}`}>
      <div className="flex w-[520px] items-start pl-[40px] pt-[24px]">
        <div className="flex gap-[40px]">
          <div className="flex h-[60px] w-[60px] items-center justify-center rounded-full bg-[#464775] text-[20px] text-white">+8</div>
          <Avatar text="RS" bg="bg-[#e3d8d3]" fg="text-[#4f3a36]" />
          <Avatar text="RS" bg="bg-[#e2dff0]" fg="text-[#403a5c]" />
          <Avatar text="RN" bg="bg-[#d3ecef]" fg="text-[#2b5b5e]" />
          <Avatar text="RH" bg="bg-[#f6e7c7]" fg="text-[#6b5020]" />
        </div>
      </div>
      <Tile name="RR M Tech CV 1A ASHWINI" text="RA" bg="bg-[#262626]" avatar="bg-[#d3e2e8]" fg="text-[#2a4a57]" />
      <Tile name="RR M Tech CV 1A SANTHOSH M" text="" bg="bg-[#1a1a1a]" avatar="bg-black" fg="text-black" />
      <Tile name="RR M Tech CV 1A HARSHITH REDDY..." text="RV" bg="bg-[#242424]" avatar="bg-[#d3e2e8]" fg="text-[#2a4a57]" />
      <Tile name="RR M Tech CV 1A SHANTHI S" text="RS" bg="bg-[#1a1a1a]" avatar="bg-[#e2dff0]" fg="text-[#403a5c]" />
      <Tile name="RR M Tech CV 1A RAGHAVENDRA V" text="RV" bg="bg-[#1a1a1a]" avatar="bg-[#f2d5c8]" fg="text-[#5e2015]" />
      <Tile name="RR M Tech CV 1A CHARITH CHALUK..." text="RC" bg="bg-[#1a1a1a]" avatar="bg-[#cdeadb]" fg="text-[#1d5a40]" />
      <Tile name="Ramachandra  P" text="RP" bg="bg-[#2e303e]" avatar="bg-[#f2d5c8]" fg="text-[#5e2015]" />
    </div>
  );
}

export default function App() {
  return (
    <div className="flex h-[1080px] w-[1920px] flex-col overflow-hidden bg-black">
      <div className="ml-[54px] flex h-[972px] w-[1811px] flex-col bg-[#e6e6e6]">
        <div className="relative shrink-0 bg-[#b7472a]">
          <Circuit />
          <TitleBar />
          <TabRow />
        </div>
        <Ribbon />
        <div className="flex min-h-0 flex-1 border-b border-t border-[#d2d2d2]">
          <SlidePanel />
          <div className="flex min-w-0 flex-1 justify-start border-l border-[#d2d2d2] pl-[102px] pt-[13px]">
            <MainSlide />
          </div>
          <EditScrollbar />
        </div>
        <StatusBar />
      </div>
      <MeetingBar />
    </div>
  );
}
